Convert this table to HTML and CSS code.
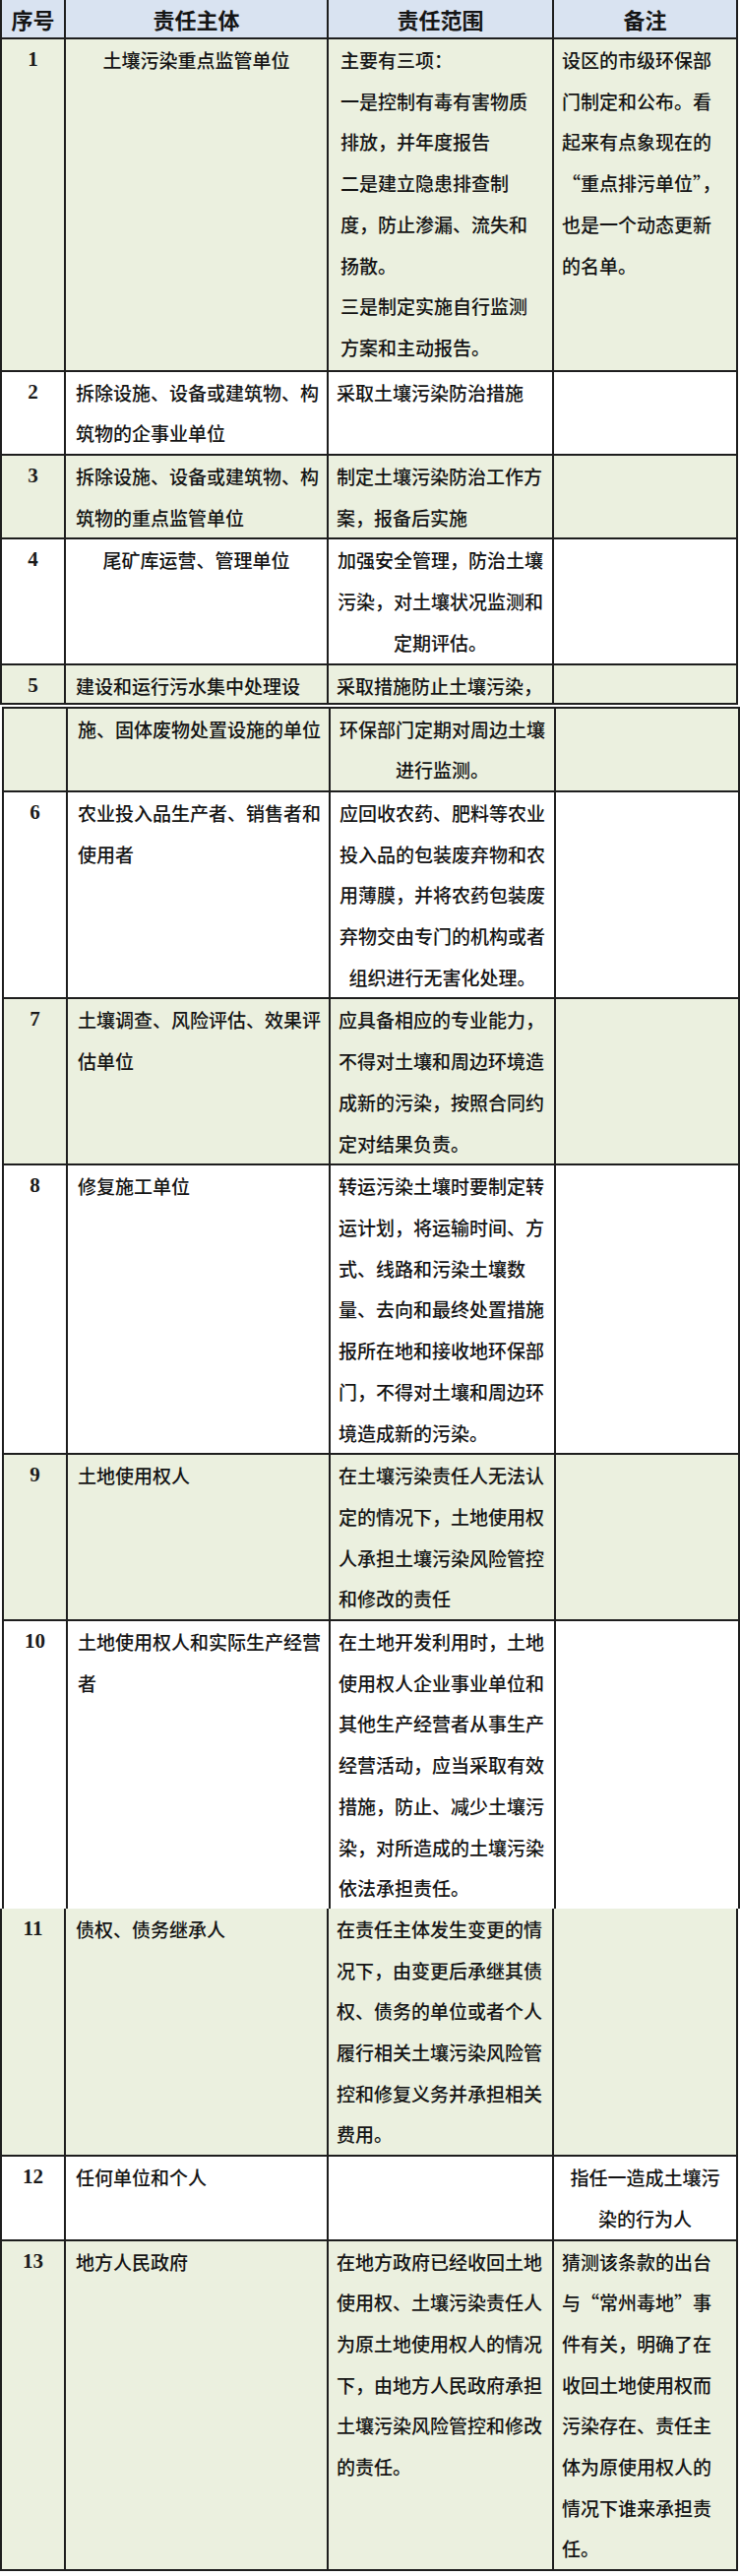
FILE: index.html
```html
<!DOCTYPE html>
<html lang="zh-CN">
<head>
<meta charset="utf-8">
<title>土壤污染责任主体</title>
<link rel="stylesheet" href="styles.css">
</head>
<body>
<div class="tbl tbl-a">
  <div class="row head">
    <div class="c c1">序号</div>
    <div class="c c2">责任主体</div>
    <div class="c c3">责任范围</div>
    <div class="c c4">备注</div>
  </div>
  <div class="row green first">
    <div class="c c1 num">1</div>
    <div class="c c2 center">土壤污染重点监管单位</div>
    <div class="c c3 wide">主要有三项：<br>一是控制有毒有害物质<br>排放，并年度报告<br>二是建立隐患排查制<br>度，防止渗漏、流失和<br>扬散。<br>三是制定实施自行监测<br>方案和主动报告。</div>
    <div class="c c4">设区的市级环保部<br>门制定和公布。看<br>起来有点象现在的<br>“重点排污单位”，<br>也是一个动态更新<br>的名单。</div>
  </div>
  <div class="row">
    <div class="c c1 num">2</div>
    <div class="c c2">拆除设施、设备或建筑物、构<br>筑物的企事业单位</div>
    <div class="c c3">采取土壤污染防治措施</div>
    <div class="c c4"></div>
  </div>
  <div class="row green">
    <div class="c c1 num">3</div>
    <div class="c c2">拆除设施、设备或建筑物、构<br>筑物的重点监管单位</div>
    <div class="c c3">制定土壤污染防治工作方<br>案，报备后实施</div>
    <div class="c c4"></div>
  </div>
  <div class="row">
    <div class="c c1 num">4</div>
    <div class="c c2 center">尾矿库运营、管理单位</div>
    <div class="c c3 center">加强安全管理，防治土壤<br>污染，对土壤状况监测和<br>定期评估。</div>
    <div class="c c4"></div>
  </div>
  <div class="row green cut">
    <div class="c c1 num">5</div>
    <div class="c c2">建设和运行污水集中处理设</div>
    <div class="c c3">采取措施防止土壤污染，</div>
    <div class="c c4"></div>
  </div>
</div>

<div class="tbl tbl-b">
  <div class="row green">
    <div class="c c1 num"></div>
    <div class="c c2">施、固体废物处置设施的单位</div>
    <div class="c c3 center">环保部门定期对周边土壤<br>进行监测。</div>
    <div class="c c4"></div>
  </div>
  <div class="row">
    <div class="c c1 num">6</div>
    <div class="c c2">农业投入品生产者、销售者和<br>使用者</div>
    <div class="c c3 center">应回收农药、肥料等农业<br>投入品的包装废弃物和农<br>用薄膜，并将农药包装废<br>弃物交由专门的机构或者<br>组织进行无害化处理。</div>
    <div class="c c4"></div>
  </div>
  <div class="row green">
    <div class="c c1 num">7</div>
    <div class="c c2">土壤调查、风险评估、效果评<br>估单位</div>
    <div class="c c3">应具备相应的专业能力，<br>不得对土壤和周边环境造<br>成新的污染，按照合同约<br>定对结果负责。</div>
    <div class="c c4"></div>
  </div>
  <div class="row">
    <div class="c c1 num">8</div>
    <div class="c c2">修复施工单位</div>
    <div class="c c3">转运污染土壤时要制定转<br>运计划，将运输时间、方<br>式、线路和污染土壤数<br>量、去向和最终处置措施<br>报所在地和接收地环保部<br>门，不得对土壤和周边环<br>境造成新的污染。</div>
    <div class="c c4"></div>
  </div>
  <div class="row green">
    <div class="c c1 num">9</div>
    <div class="c c2">土地使用权人</div>
    <div class="c c3">在土壤污染责任人无法认<br>定的情况下，土地使用权<br>人承担土壤污染风险管控<br>和修改的责任</div>
    <div class="c c4"></div>
  </div>
  <div class="row last">
    <div class="c c1 num">10</div>
    <div class="c c2">土地使用权人和实际生产经营<br>者</div>
    <div class="c c3">在土地开发利用时，土地<br>使用权人企业事业单位和<br>其他生产经营者从事生产<br>经营活动，应当采取有效<br>措施，防止、减少土壤污<br>染，对所造成的土壤污染<br>依法承担责任。</div>
    <div class="c c4"></div>
  </div>
</div>

<div class="tbl tbl-c">
  <div class="row green">
    <div class="c c1 num">11</div>
    <div class="c c2">债权、债务继承人</div>
    <div class="c c3">在责任主体发生变更的情<br>况下，由变更后承继其债<br>权、债务的单位或者个人<br>履行相关土壤污染风险管<br>控和修复义务并承担相关<br>费用。</div>
    <div class="c c4"></div>
  </div>
  <div class="row">
    <div class="c c1 num">12</div>
    <div class="c c2">任何单位和个人</div>
    <div class="c c3"></div>
    <div class="c c4 center">指任一造成土壤污<br>染的行为人</div>
  </div>
  <div class="row green">
    <div class="c c1 num">13</div>
    <div class="c c2">地方人民政府</div>
    <div class="c c3">在地方政府已经收回土地<br>使用权、土壤污染责任人<br>为原土地使用权人的情况<br>下，由地方人民政府承担<br>土壤污染风险管控和修改<br>的责任。</div>
    <div class="c c4">猜测该条款的出台<br>与“常州毒地”事<br>件有关，明确了在<br>收回土地使用权而<br>污染存在、责任主<br>体为原使用权人的<br>情况下谁来承担责<br>任。</div>
  </div>
</div>
</body>
</html>
```

FILE: styles.css
```css
html, body {
  margin: 0;
  padding: 0;
  background: #ffffff;
}

body {
  font-family: "Noto Sans CJK SC", "Noto Sans", sans-serif;
  color: #141414;
  width: 752px;
}

.tbl {
  width: 750px;
  border-left: 2px solid #1e1e1e;
  box-sizing: border-box;
}

.tbl-b {
  margin-left: 2px;
  margin-top: 2px;
  border-top: 2px solid #1e1e1e;
}

.row {
  display: grid;
  grid-template-columns: 65px 267px 229px 187px;
  background: #ffffff;
}

.row.green {
  background: #ebf0df;
}

.row.head {
  background: #d9e3f1;
}

.c {
  box-sizing: border-box;
  border-right: 2px solid #1e1e1e;
  border-bottom: 2px solid #1e1e1e;
  font-size: 19px;
  font-weight: 500;
  line-height: 41.7px;
  white-space: nowrap;
  overflow: hidden;
  padding: 0 0 0 8px;
}

.c2 {
  padding-left: 10px;
}

.c3.wide {
  padding-left: 12px;
}

.row.first .c {
  padding-bottom: 2px;
}

.row.cut .c {
  height: 40px;
}

.row.last .c {
  border-bottom: none;
}

.center {
  text-align: center;
  padding-left: 0;
}

.num {
  padding: 0;
  text-align: center;
  font-family: "Liberation Serif", serif;
  font-weight: bold;
  font-size: 21px;
  color: #1a1a1a;
}

.row.head .c {
  font-weight: bold;
  font-size: 22px;
  line-height: 38px;
  text-align: center;
  padding: 0;
  color: #151515;
}
```
